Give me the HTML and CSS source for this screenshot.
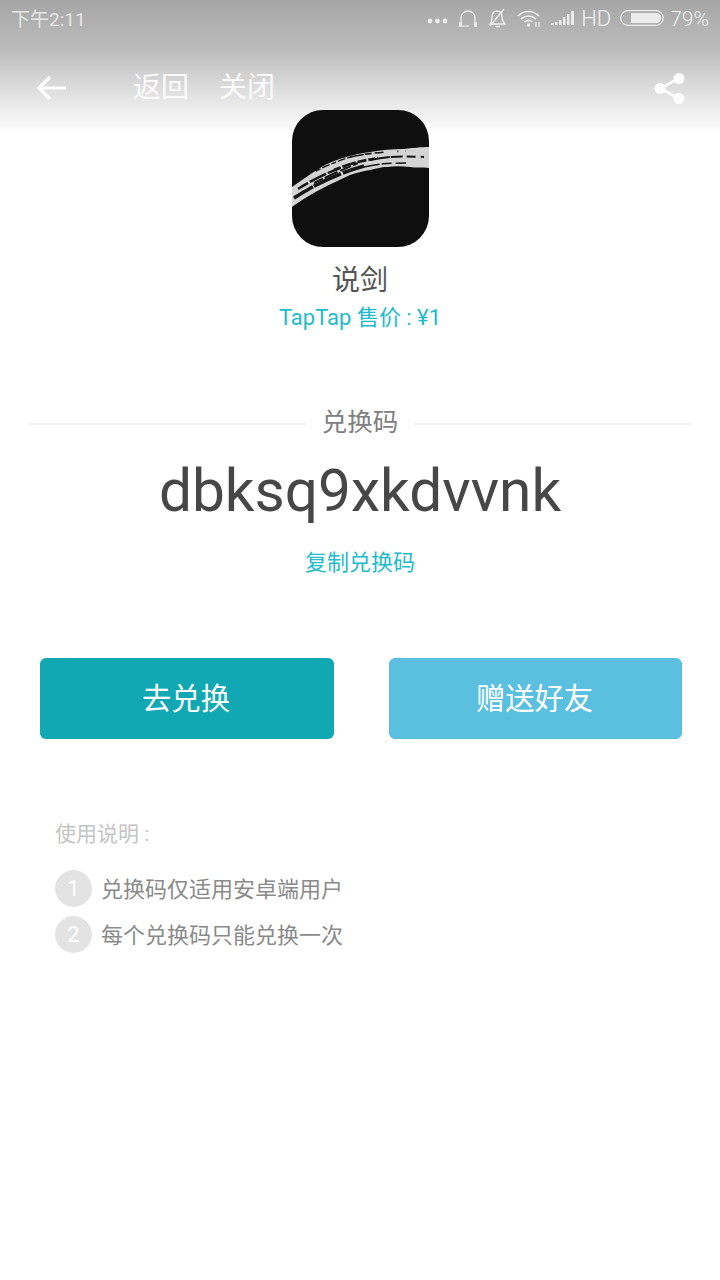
FILE: index.html
```html
<!DOCTYPE html>
<html lang="zh-CN">
<head>
<meta charset="utf-8">
<title>兑换码</title>
<link rel="stylesheet" href="styles.css">
</head>
<body>
<div class="page">
  <header class="top">
    <div class="status">
      <span class="time">下午2:11</span>
      <div class="status-right">
        <svg class="i-dots" viewBox="0 0 21 6"><circle cx="3" cy="3" r="2.4"/><circle cx="10.5" cy="3" r="2.4"/><circle cx="18" cy="3" r="2.4"/></svg>
        <svg class="i-head" viewBox="0 0 20 20"><path d="M3 15V10A7 7 0 0 1 17 10V15" fill="none" stroke-width="1.4"/><rect x="1" y="14" width="3" height="5" rx="1.2" class="fill"/><rect x="16" y="14" width="3" height="5" rx="1.2" class="fill"/><path d="M4 18H11" fill="none" stroke-width="1.2"/></svg>
        <svg class="i-bell" viewBox="0 0 20 20"><path d="M3 16C5 14 5 12 5 9C5 5 7 3 10 3C13 3 15 5 15 9C15 12 16 14 18 16Z" fill="none" stroke-width="1.4"/><path d="M8 18.5H13" fill="none" stroke-width="1.5"/><path d="M3 18L17 1" fill="none" stroke-width="1.4"/></svg>
        <svg class="i-wifi" viewBox="0 0 24 19"><path d="M1 7C7 1 16 1 22 7M4 10C8.500 6 14.500 6 19 10M7.500 13C10 11 13 11 15.500 13" fill="none" stroke-width="1.7"/><circle cx="11.500" cy="16" r="1.700" class="fill"/><path d="M19 18V13M22 18V13" fill="none" stroke-width="1.400"/></svg>
        <svg class="i-signal" viewBox="0 0 24 16"><rect x="0" y="13" width="2.500" height="2" class="fill"/><rect x="4" y="12" width="2.500" height="3" class="fill"/><rect x="8" y="10" width="2.500" height="5" class="fill"/><rect x="12" y="7" width="2.500" height="8" class="fill"/><rect x="16" y="4" width="2.500" height="11" class="fill"/><rect x="20" y="1" width="3" height="14" class="fill"/></svg>
        <span class="hd">HD</span>
        <svg class="i-batt" viewBox="0 0 44 16"><rect x="0.700" y="0.700" width="42.600" height="14.600" rx="7.300" fill="none" stroke-width="1.200"/><path d="M11 3H36C39 3 41 5 41 8C41 11 39 13 36 13H11Z" class="fill"/></svg>
        <span class="pct">79%</span>
      </div>
    </div>
    <nav class="nav">
      <svg class="i-back" viewBox="0 0 30 26"><path d="M30 13H3M14 2L3 13L14 24" fill="none" stroke-width="3.200"/></svg>
      <a class="nav-link nav-back">返回</a>
      <a class="nav-link">关闭</a>
      <svg class="i-share" viewBox="0 0 31 33"><path d="M24.500 6.500L6.500 16.500L24.500 26.500" fill="none" stroke-width="2.600"/><circle cx="25" cy="6.500" r="5.500" class="fill"/><circle cx="6" cy="16.500" r="5.500" class="fill"/><circle cx="25" cy="26.500" r="5.500" class="fill"/></svg>
    </nav>
  </header>
  <main class="content">
    <svg class="game-icon" viewBox="0 0 137 137" aria-label="说剑">
      <defs>
        <clipPath id="icon-clip"><rect width="137" height="137" rx="31"/></clipPath>
        <filter id="soft" x="-5%" y="-5%" width="110%" height="110%"><feGaussianBlur stdDeviation="0.45"/></filter>
      </defs>
      <g clip-path="url(#icon-clip)">
        <rect width="137" height="137" fill="#0f0f0f"/>
        <g filter="url(#soft)">
          <path class="brush" d="M0 77C10 70 20 63 28 58C36 53 44 50 51 48C60 45 70 43 78 42C90 40 100 39 111 39C120 38 130 37 137 37V58C130 57 124 58 118 57C110 56 102 56 95 57C88 57 84 59 78 60C70 61 64 63 58 65C50 69 40 73 31 78C25 81 20 84 15 87C10 90 5 93 0 97Z"/>
          <g class="streaks">
            <path stroke-width="3.600" stroke-dasharray="22 1 30 2 26" d="M2 88C24 74 44 64 72 56"/>
            <path stroke-width="2.400" stroke-dasharray="12 2 18 2 14 3" d="M6 79C20 70 36 62 54 56"/>
            <path stroke-width="2" stroke-dasharray="10 2 14 3 12 2" d="M22 73C36 66 50 60 66 53"/>
            <path stroke-width="2.600" stroke-dasharray="7 2 14 2 9 2" d="M42 60C56 54 68 51 86 48"/>
            <path stroke-width="2" stroke-dasharray="20 1 12 4 9 5 12" d="M78 50C96 46 112 46 132 47"/>
            <path stroke-width="1.600" stroke-dasharray="14 1 7 3 9" d="M58 47C76 43 92 42 114 41"/>
            <path stroke-width="1.500" stroke-dasharray="16 2 10 4" d="M72 57C84 54 96 53 114 53"/>
            <path stroke-width="1.400" stroke-dasharray="5 2 8 2" d="M24 61C36 55 48 50 62 46"/>
            <path stroke-width="1.400" stroke-dasharray="6 3 5 4" d="M14 90C24 84 34 78 46 73"/>
          </g>
        </g>
      </g>
    </svg>
    <h1 class="game-name">说剑</h1>
    <p class="price">TapTap 售价 : ¥1</p>
    <div class="code-label"><span class="rule"></span><span class="code-label-text">兑换码</span><span class="rule"></span></div>
    <div class="code">dbksq9xkdvvnk</div>
    <a class="copy">复制兑换码</a>
    <div class="actions">
      <button class="btn btn-primary">去兑换</button>
      <button class="btn btn-secondary">赠送好友</button>
    </div>
    <section class="notes">
      <h2 class="notes-title">使用说明 :</h2>
      <ol class="notes-list">
        <li class="note"><span class="num">1</span><span class="note-text">兑换码仅适用安卓端用户</span></li>
        <li class="note"><span class="num">2</span><span class="note-text">每个兑换码只能兑换一次</span></li>
      </ol>
    </section>
  </main>
</div>
</body>
</html>
```

FILE: styles.css
```css
* { box-sizing: border-box; margin: 0; padding: 0; }
html, body { background: #fff; }
body {
  font-family: Roboto, "Noto Sans CJK SC", sans-serif;
  color: #4a4a4a;
}
.page { position: relative; width: 720px; height: 1280px; overflow: hidden; background: #fff; }

.top {
  position: absolute;
  left: 0; top: 0; right: 0;
  height: 138px;
  background: linear-gradient(to bottom, #a6a6a6 0%, #bcbcbc 36%, #d8d8d8 60%, #f0f0f0 82%, #ffffff 98%);
  color: #efefef;
}
.status {
  display: flex; justify-content: space-between; align-items: center;
  height: 36px;
  padding: 0 11px;
  font-size: 19px;
  color: #e6e6e6;
}
.status svg { stroke: #ececec; fill: #ececec; display: block; }
.status svg .fill { stroke: none; }
.time { margin-top: -1px; }
.status-right { display: flex; align-items: center; }
.i-dots { width: 21px; height: 6px; margin-top: 5px; stroke: none !important; }
.i-head { width: 20px; height: 20px; margin-left: 10px; }
.i-bell { width: 20px; height: 20px; margin-left: 9px; }
.i-wifi { width: 24px; height: 19px; margin-left: 10px; }
.i-signal { width: 24px; height: 16px; margin-left: 10px; }
.hd { font-size: 22px; font-weight: 300; margin-left: 6px; color: #f2f2f2; }
.i-batt { width: 44px; height: 16px; margin-left: 9px; }
.pct { font-size: 21px; font-weight: 300; margin-left: 6px; margin-top: 2px; color: #f2f2f2; }

.nav { display: flex; align-items: center; height: 104px; padding: 0 35px 0 36px; font-size: 28px; color: #fbfbfb; }
.nav svg { stroke: #fdfdfd; fill: #fdfdfd; display: block; }
.nav svg .fill { stroke: none; }
.i-back { width: 30px; height: 26px; }
.nav-link { margin-left: 30px; line-height: 36px; }
.nav-back { margin-left: 67px; }
.i-share { width: 31px; height: 33px; margin-left: auto; }

.content { position: relative; z-index: 1; display: flex; flex-direction: column; align-items: center; padding-top: 110px; }
.game-icon { width: 137px; height: 137px; display: block; margin-left: 1px; }
.brush { fill: #d4d4d4; }
.streaks path { fill: none; stroke: #141414; }
.game-name { font-size: 28px; font-weight: 400; line-height: 38px; margin-top: 15px; color: #555; }
.price { font-size: 22px; line-height: 30px; margin-top: 3px; color: #22bbca; }
.code-label { display: flex; align-items: center; align-self: stretch; margin: 71px 28px 0; font-size: 25.5px; line-height: 36px; color: #808080; }
.rule { flex: 1; height: 2px; background: #f1f1f1; }
.code-label-text { padding: 0 16px 3px; }
.code { font-size: 58.6px; line-height: 70px; margin-top: 13px; color: #474747; }
.copy { font-size: 22px; line-height: 30px; margin-top: 22px; color: #22bbca; }
.actions { display: flex; justify-content: space-between; align-self: stretch; padding: 0 38px 0 40px; margin-top: 80px; }
.btn { width: 294px; height: 81px; border: 0; border-radius: 6px; color: #fff; font: inherit; font-size: 29.3px; padding: 0 2px 5px 0; }
.btn-primary { background: #11a8b4; }
.btn-secondary { width: 293px; background: #5bbfdf; border: 1px solid #56bbdd; }

.notes { align-self: stretch; padding-left: 55px; margin-top: 78px; }
.notes-title { font-size: 21px; font-weight: 400; line-height: 34px; color: #c4c4c4; }
.notes-list { list-style: none; margin-top: 19px; }
.note { display: flex; align-items: center; height: 37px; margin-bottom: 9px; font-size: 22px; color: #8a8a8a; }
.note-text { margin-bottom: 4px; }
.num { width: 37px; height: 37px; border-radius: 50%; background: #e3e3e3; color: #fff; display: flex; justify-content: center; align-items: center; margin-right: 9px; }
```
